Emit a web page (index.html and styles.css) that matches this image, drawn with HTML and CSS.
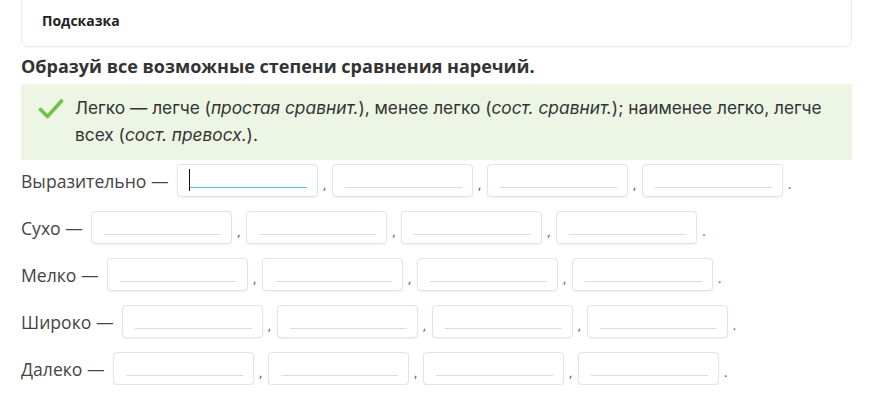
FILE: index.html
```html
<!DOCTYPE html>
<html lang="ru">
<head>
<meta charset="utf-8">
<link rel="stylesheet" href="styles.css">
</head>
<body>
<div class="page">
  <div class="hint-card"><span class="hint-title">Подсказка</span></div>
  <h2 class="task">Образуй все возможные степени сравнения наречий.</h2>
  <div class="example">
    <svg class="check" width="26" height="22" viewBox="0 0 26 22"><path d="M2.5 11.5 L9.5 18.5 L23.5 3" fill="none" stroke="#72c14a" stroke-width="3.6" stroke-linecap="round" stroke-linejoin="round"/></svg>
    <p class="example-text">Легко — легче (<i>простая сравнит.</i>), менее легко (<i>сост. сравнит.</i>); наименее легко, легче всех (<i>сост. превосх.</i>).</p>
  </div>
  <div class="rows">
    <div class="row">
      <span class="label">Выразительно —</span>
      <span class="field focused"><span class="caret"></span><span class="line"></span></span><span class="sep">,</span>
      <span class="field"><span class="line"></span></span><span class="sep">,</span>
      <span class="field"><span class="line"></span></span><span class="sep">,</span>
      <span class="field"><span class="line"></span></span><span class="sep">.</span>
    </div>
    <div class="row">
      <span class="label">Сухо —</span>
      <span class="field"><span class="line"></span></span><span class="sep">,</span>
      <span class="field"><span class="line"></span></span><span class="sep">,</span>
      <span class="field"><span class="line"></span></span><span class="sep">,</span>
      <span class="field"><span class="line"></span></span><span class="sep">.</span>
    </div>
    <div class="row">
      <span class="label">Мелко —</span>
      <span class="field"><span class="line"></span></span><span class="sep">,</span>
      <span class="field"><span class="line"></span></span><span class="sep">,</span>
      <span class="field"><span class="line"></span></span><span class="sep">,</span>
      <span class="field"><span class="line"></span></span><span class="sep">.</span>
    </div>
    <div class="row">
      <span class="label">Широко —</span>
      <span class="field"><span class="line"></span></span><span class="sep">,</span>
      <span class="field"><span class="line"></span></span><span class="sep">,</span>
      <span class="field"><span class="line"></span></span><span class="sep">,</span>
      <span class="field"><span class="line"></span></span><span class="sep">.</span>
    </div>
    <div class="row">
      <span class="label">Далеко —</span>
      <span class="field"><span class="line"></span></span><span class="sep">,</span>
      <span class="field"><span class="line"></span></span><span class="sep">,</span>
      <span class="field"><span class="line"></span></span><span class="sep">,</span>
      <span class="field"><span class="line"></span></span><span class="sep">.</span>
    </div>
  </div>
</div>
</body>
</html>
```

FILE: styles.css
```css
html, body {
  margin: 0;
  padding: 0;
  background: #fff;
}
.page {
  width: 831px;
  margin-left: 21px;
  font-family: "Open Sans", "Noto Sans", sans-serif;
  color: #333;
}
.hint-card {
  margin-top: -10px;
  height: 57px;
  box-sizing: border-box;
  border: 1px solid #ebebeb;
  border-radius: 0 0 7px 7px;
  padding: 18px 0 0 20px;
  box-shadow: 0 1px 1px rgba(0,0,0,0.03);
}
.hint-title {
  font-size: 14px;
  font-weight: 700;
  color: #222;
}
.task {
  margin: 0;
  padding: 7px 0 0 0;
  height: 30px;
  font-size: 18px;
  line-height: 24px;
  font-weight: 700;
  color: #333;
}
.example {
  display: flex;
  align-items: flex-start;
  background: #edf5e5;
  height: 76px;
  box-sizing: border-box;
  padding: 10px 20px 0 17px;
}
.check {
  flex: none;
  margin-top: 4px;
  margin-right: 11px;
}
.example-text {
  margin: 0;
  font-family: Inter, "Noto Sans", sans-serif;
  font-size: 17.3px;
  line-height: 27px;
  color: #333;
}
.example-text i {
  font-style: italic;
}
.rows {
  display: flex;
  flex-direction: column;
  gap: 14px;
  padding-top: 4px;
}
.row {
  display: flex;
  align-items: center;
  height: 33px;
  font-size: 17.6px;
  color: #444;
}
.label {
  margin-right: 8px;
  white-space: nowrap;
}
.field {
  position: relative;
  display: block;
  flex: none;
  width: 141px;
  height: 33px;
  box-sizing: border-box;
  border: 1px solid #e3e3e3;
  border-radius: 4px;
  background: #fff;
  box-shadow: 0 1px 2px rgba(0,0,0,0.06);
}
.line {
  position: absolute;
  left: 12px;
  right: 10px;
  bottom: 8px;
  height: 1px;
  background: #dcdcdc;
}
.focused .line {
  background: #4cc3d1;
}
.caret {
  position: absolute;
  left: 11px;
  top: 4px;
  width: 1px;
  height: 22px;
  background: #111;
}
.sep {
  flex: none;
  width: 14px;
  text-align: center;
  font-size: 13px;
  color: #555;
  padding-top: 6px;
}
```
